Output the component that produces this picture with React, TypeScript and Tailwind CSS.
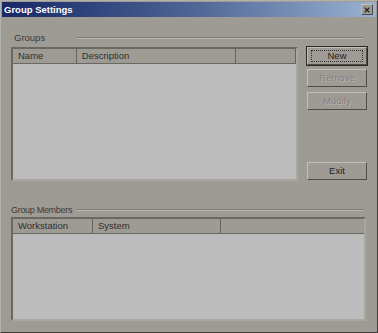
import { X } from 'lucide-react'

const face = 'bg-[#9e9b94]'

function Groove() {
  return <div className="flex-1 h-[2px] border-t border-t-[#807d77] border-b border-b-[#b8b6b0]" />
}

function Header({ cols }: { cols: { label: string; w: string }[] }) {
  return (
    <div className="flex h-[15px] bg-[#9e9b94] border-b border-b-[#6a6863]">
      {cols.map((c) => (
        <div
          key={c.label + c.w}
          className={`${c.w} h-full pl-[5px] flex items-center border-r border-r-[#66645f] text-[9.5px] leading-none text-[#2e2e2e]`}
        >
          {c.label}
        </div>
      ))}
      <div className="flex-1" />
    </div>
  )
}

function Btn({ label, disabled, focused }: { label: string; disabled?: boolean; focused?: boolean }) {
  return (
    <button
      type="button"
      className={`w-[60px] h-[18px] ${face} text-[9.5px] leading-none border border-t-[#c2c0ba] border-l-[#c2c0ba] border-r-[#4f4d49] border-b-[#4f4d49] flex items-center justify-center ${
        focused ? 'outline outline-1 outline-[#2a2a2a]' : ''
      } ${disabled ? 'text-[#85827c] [text-shadow:1px_1px_0_#b8b6b0]' : 'text-[#222]'}`}
    >
      <span className={focused ? 'w-[52px] h-[12px] flex items-center justify-center border border-dotted border-[#333]' : ''}>
        {label}
      </span>
    </button>
  )
}

export default function App() {
  return (
    <div
      className={`w-[378px] h-[333px] ${face} flex flex-col border border-t-[#b4b2ac] border-l-[#b4b2ac] border-r-[#3e3d3a] border-b-[#3e3d3a] font-['Liberation_Sans',Arial,sans-serif]`}
    >
      <div className="mx-[1px] mt-[1px] h-[15px] flex items-center justify-between bg-gradient-to-r from-[#182866] via-[#4d6494] to-[#9ab2d0] px-[2px]">
        <span className="text-[9.5px] font-bold text-white leading-none">Group Settings</span>
        <div className="w-[12px] h-[11px] bg-[#9e9b94] border border-t-[#c2c0ba] border-l-[#c2c0ba] border-r-[#4f4d49] border-b-[#4f4d49] flex items-center justify-center mr-[1px]">
          <X size={8} strokeWidth={3.5} className="text-[#222]" />
        </div>
      </div>

      <div className="mt-[15px] h-[12px] flex items-center pr-[13px]">
        <span className="w-[75px] flex-none pl-[13px] text-[9.5px] leading-none text-[#3a3a3a]">Groups</span>
        <Groove />
      </div>

      <div className="mt-[3px] flex">
        <div className="ml-[10px] w-[287px] h-[134px] bg-[#bcbcbc] border-2 border-t-[#6a6863] border-l-[#6a6863] border-r-[#a9a7a1] border-b-[#a9a7a1] flex flex-col">
          <Header
            cols={[
              { label: 'Name', w: 'w-[64px]' },
              { label: 'Description', w: 'w-[160px]' },
              { label: '', w: 'w-[60px]' },
            ]}
          />
        </div>
        <div className="ml-[9px] flex flex-col">
          <Btn label="New" focused />
          <div className="mt-[4px]">
            <Btn label="Remove" disabled />
          </div>
          <div className="mt-[5px]">
            <Btn label="Modify" disabled />
          </div>
          <div className="mt-[52px]">
            <Btn label="Exit" />
          </div>
        </div>
      </div>

      <div className="mt-[23px] h-[12px] flex items-center pr-[13px]">
        <span className="w-[75px] flex-none pl-[10px] text-[9px] tracking-[-0.3px] leading-none text-[#3a3a3a] whitespace-nowrap">
          Group Members
        </span>
        <Groove />
      </div>

      <div className="mt-[1px] ml-[10px] w-[355px] h-[104px] bg-[#bcbcbc] border-2 border-t-[#6a6863] border-l-[#6a6863] border-r-[#a9a7a1] border-b-[#a9a7a1] flex flex-col">
        <Header
          cols={[
            { label: 'Workstation', w: 'w-[80px]' },
            { label: 'System', w: 'w-[128px]' },
          ]}
        />
      </div>
    </div>
  )
}
